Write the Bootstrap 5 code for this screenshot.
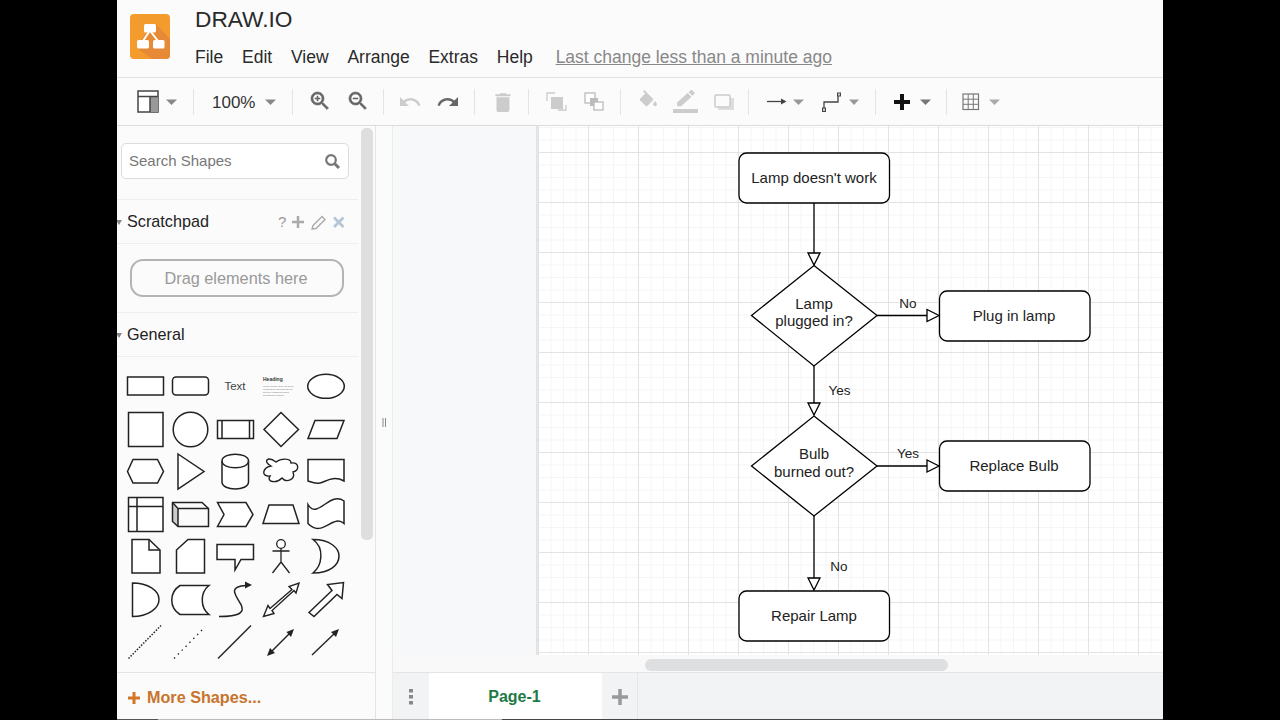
<!DOCTYPE html>
<html lang="en">
<head>
<meta charset="utf-8">
<title>DRAW.IO</title>
<link href="https://cdn.jsdelivr.net/npm/bootstrap@5.3.0/dist/css/bootstrap.min.css" rel="stylesheet">
<style>
html,body{height:720px;overflow:hidden}
body{background:#000;font-family:"Liberation Sans",Arial,sans-serif;color:#222}
.app-frame{position:relative;width:1046px;height:720px;margin-left:117px;background:#fbfbfb;overflow:hidden}
.top-head{height:78px;border-bottom:1px solid #e2e2e2}
.logo-box{margin:14px 25px 0 13px;width:40px;height:45px;flex:none}
.doc-title{font-size:22.700px;line-height:26px;margin-top:6px;color:#2a2a2a}
.menu-row{margin-top:13px;font-size:17.500px;line-height:24px;gap:18.800px;color:#2a2a2a}
.last-change{margin-left:4px;color:#888;text-decoration:underline}
.tool-row{height:48px;border-bottom:1px solid #dcdcdc}
.tool-row svg{display:block;flex:none}
.tool-sep{width:1px;height:26px;background:#e4e4e4;align-self:center;flex:none}
.main-row{height:594px}
.side-panel{width:259px;flex:none;border-right:1px solid #e4e4e4}
.side-top{height:546px;overflow:hidden}
.side-list{width:241px;flex:none}
.search-wrap{padding:17px 9px 20px 4px;border-bottom:1px solid #eee}
.search-box{height:36px;border:1px solid #dcdcdc;border-radius:5px;background:#fff;padding:0 7px 0 7px;font-size:15px;color:#777}
.side-head{height:44px;border-bottom:1px solid #eee;font-size:16.200px;color:#222;padding-left:10px;position:relative}
.side-caret{position:absolute;left:-1px;top:20px;width:0;height:0;border-left:3px solid transparent;border-right:3px solid transparent;border-top:5px solid #888}
.head-tools{margin-left:auto;margin-right:13px}
.drop-wrap{height:69px;padding:15px 14px 0 13px;border-bottom:1px solid #eee}
.drop-box{height:38px;border:2px solid #b4b4b4;border-radius:13px;color:#999;font-size:16.300px;padding-right:2px}
.shape-grid{display:grid;grid-template-columns:repeat(5,45px);grid-auto-rows:42.5px;padding:8px 0 0 6px}
.shape-grid svg{display:block;overflow:visible}
.scroll-strip{flex:1}
.scroll-thumb{width:12px;height:412px;margin:2px 0 0 3px;background:#dedede;border-radius:5px}
.more-row{height:48px;border-top:1px solid #e4e4e4;padding:2px 0 0 11px;gap:7px;color:#c9742c;font-size:16.200px;font-weight:700}
.split-bar{width:17px;flex:none;border-right:1px solid #ececec}
.work-col{min-width:0}
.canvas-row{height:529px}
.canvas-pad{width:143px;flex:none;background:#f7f8fa}
.canvas-grid{position:relative;border-left:2px solid #e4e4e4;
background-color:#fff;
background-image:linear-gradient(#e3e3e3 1px,transparent 1px),linear-gradient(90deg,#e3e3e3 1px,transparent 1px),linear-gradient(#f5f5f5 1px,transparent 1px),linear-gradient(90deg,#f5f5f5 1px,transparent 1px);
background-size:50px 50px,50px 50px,12.5px 12.5px,12.5px 12.5px;
background-position:0 26px,0 26px,0 1px,0 1px}
.flow-chart{position:absolute;left:0;top:0;display:block;font-family:"Liberation Sans",Arial,sans-serif}
.hscroll-strip{height:17px;padding:4px 0 0 252px;background:#f9f9fa}
.hscroll-thumb{width:303px;height:12px;background:#dedfe1;border-radius:6px}
.tab-row{height:48px;background:#f1f3f4;border-top:1px solid #e4e4e4}
.tab-cell{width:36px;flex:none}
.tab-active{width:173px;flex:none;background:#fff;color:#1f7a45;font-weight:700;font-size:16px;padding-right:2px}
.tab-add{width:36px;flex:none;border-right:1px solid #e6e6e6}
.video-bar{position:absolute;left:0;right:0;bottom:0;height:1px;background:#444}
.video-bar-seen{width:385px;height:1px;background:#bbb}
.video-bar-played{width:41px;height:1px;background:#555}
</style>
</head>
<body>
<div class="app-frame d-flex flex-column">
  <header class="top-head d-flex flex-none">
    <svg class="logo-box" viewBox="0 0 40 45" width="40" height="45">
      <rect width="40" height="45" rx="4" fill="#f39b2d"/>
      <path d="M26 10 L40 25 V41 a4 4 0 0 1 -4 4 H22 L7 34 L14 22 Z" fill="#e68a37"/>
      <rect x="14" y="10" width="12" height="8.500" rx="1.500" fill="#fff"/>
      <rect x="7" y="26" width="12" height="8.500" rx="1.500" fill="#fff"/>
      <rect x="23" y="26" width="11.500" height="8.500" rx="1.500" fill="#fff"/>
      <path d="M19 18 L13 27 M21 18 L28 27" stroke="#fff" stroke-width="2" fill="none"/>
    </svg>
    <div>
      <div class="doc-title">DRAW.IO</div>
      <div class="menu-row d-flex">
        <span>File</span><span>Edit</span><span>View</span><span>Arrange</span><span>Extras</span><span>Help</span>
        <span class="last-change">Last change less than a minute ago</span>
      </div>
    </div>
  </header>

  <div class="tool-row d-flex align-items-stretch">
    <svg width="76" height="48" viewBox="117 78 76 48">
      <rect x="138" y="91" width="20" height="21" fill="#fff" stroke="#444" stroke-width="1.500"/>
      <rect x="150" y="96" width="8" height="16" fill="#999"/>
      <path d="M138 96.500H158M150 96.500V112" stroke="#444" stroke-width="1.500"/>
      <path d="M166 99.500H177L171.500 105Z" fill="#888"/>
    </svg>
    <div class="tool-sep"></div>
    <svg width="98" height="48" viewBox="194 78 98 48">
      <text x="212" y="108" font-size="17" fill="#333">100%</text>
      <path d="M265 99.500H276L270.500 105Z" fill="#888"/>
    </svg>
    <div class="tool-sep"></div>
    <svg width="90" height="48" viewBox="293 78 90 48">
      <g transform="translate(308 89)" fill="#666" stroke="#666" stroke-width=".6"><path d="M15.500 14h-.79l-.28-.27C15.410 12.590 16 11.110 16 9.500 16 5.910 13.090 3 9.500 3S3 5.910 3 9.500 5.910 16 9.500 16c1.610 0 3.090-.59 4.230-1.570l.27.28v.79l5 4.990L20.490 19l-4.990-5zm-6 0C7.010 14 5 11.990 5 9.500S7.010 5 9.500 5 14 7.010 14 9.500 11.990 14 9.500 14z"/><path d="M12 10h-2v2H9v-2H7V9h2V7h1v2h2v1z"/></g>
      <g transform="translate(346 89)" fill="#666" stroke="#666" stroke-width=".6"><path d="M15.500 14h-.79l-.28-.27C15.410 12.590 16 11.110 16 9.500 16 5.910 13.090 3 9.500 3S3 5.910 3 9.500 5.910 16 9.500 16c1.610 0 3.090-.59 4.230-1.570l.27.28v.79l5 4.990L20.490 19l-4.990-5zm-6 0C7.010 14 5 11.990 5 9.500S7.010 5 9.500 5 14 7.010 14 9.500 11.990 14 9.500 14z"/><path d="M7 9h5v1H7z"/></g>
    </svg>
    <div class="tool-sep"></div>
    <svg width="90" height="48" viewBox="384 78 90 48">
      <g transform="translate(398 90)" fill="#ccc"><path d="M12.500 8c-2.650 0-5.050.99-6.900 2.600L2 7v9h9l-3.620-3.620c1.390-1.160 3.160-1.880 5.120-1.880 3.540 0 6.550 2.310 7.600 5.500l2.370-.78C21.080 11.030 17.150 8 12.500 8z"/></g>
      <g transform="translate(436 90)" fill="#666"><path d="M18.400 10.600C16.550 8.990 14.150 8 11.500 8c-4.650 0-8.580 3.030-9.960 7.220L3.900 16c1.050-3.190 4.050-5.500 7.600-5.500 1.950 0 3.730.72 5.120 1.880L13 16h9V7l-3.600 3.600z"/></g>
    </svg>
    <div class="tool-sep"></div>
    <svg width="53" height="48" viewBox="475 78 53 48">
      <g transform="translate(490 90) scale(1.080 1.050)" fill="#ccc"><path d="M6 19c0 1.100.9 2 2 2h8c1.100 0 2-.9 2-2V7H6v12zM19 4h-3.500l-1-1h-5l-1 1H5v2h14V4z"/></g>
    </svg>
    <div class="tool-sep"></div>
    <svg width="91" height="48" viewBox="529 78 91 48">
      <rect x="551" y="97" width="12" height="12" fill="#ccc"/>
      <path d="M547 101V93H555M566 105V110H558" fill="none" stroke="#ccc" stroke-width="1.300"/>
      <rect x="585" y="93" width="10" height="10" fill="#fff" stroke="#bbb" stroke-width="1.300"/>
      <rect x="590" y="98" width="8" height="8" fill="#bbb"/>
      <rect x="594" y="102" width="9" height="8" fill="#fff" stroke="#bbb" stroke-width="1.300"/>
    </svg>
    <div class="tool-sep"></div>
    <svg width="127" height="48" viewBox="621 78 127 48">
      <g transform="translate(637 90) scale(.95)" fill="#ccc"><path d="M16.560 8.940L7.620 0 6.210 1.410l2.380 2.380-5.150 5.150c-.59.590-.59 1.540 0 2.120l5.500 5.500c.29.29.68.44 1.060.44s.77-.15 1.060-.44l5.500-5.500c.59-.58.59-1.530 0-2.120z"/><path d="M19 11.500s-2 2.170-2 3.500c0 1.100.9 2 2 2s2-.9 2-2c0-1.330-2-3.500-2-3.500z"/></g>
      <g transform="translate(673 90) scale(1.040 .95)" fill="#ccc"><path d="M17.750 7L14 3.250l-10 10V17h3.750l10-10zm2.960-2.960c.39-.39.39-1.020 0-1.410L18.370.29c-.39-.39-1.020-.39-1.410 0L15 2.250 18.750 6l1.960-1.960z"/></g>
      <rect x="673" y="109" width="25" height="4" fill="#ccc"/>
      <rect x="718" y="98" width="16" height="12" fill="#ddd"/>
      <rect x="715" y="95" width="15" height="12" rx="1" fill="#fbfbfb" stroke="#ccc" stroke-width="1.500"/>
    </svg>
    <div class="tool-sep"></div>
    <svg width="126" height="48" viewBox="749 78 126 48">
      <path d="M767 101.500H785" stroke="#444" stroke-width="1.300"/><path d="M781 98.500L786.500 101.500L781 104.500Z" fill="#444"/>
      <path d="M793 99.500H804L798.500 105Z" fill="#999"/>
      <path d="M824 108V102H838V96" fill="none" stroke="#444" stroke-width="1.300"/>
      <rect x="822.500" y="108" width="3" height="3.500" fill="#ccc" stroke="#444"/>
      <rect x="837.500" y="93" width="3" height="3" fill="#ccc" stroke="#444"/>
      <path d="M849 99.500H859L854 105Z" fill="#999"/>
    </svg>
    <div class="tool-sep"></div>
    <svg width="70" height="48" viewBox="876 78 70 48">
      <path d="M902 94V110M894 102H910" stroke="#111" stroke-width="4"/>
      <path d="M920 99.500H931L925.500 105Z" fill="#777"/>
    </svg>
    <div class="tool-sep"></div>
    <svg width="60" height="48" viewBox="947 78 60 48">
      <rect x="963" y="94" width="15.500" height="15.500" fill="none" stroke="#777" stroke-width="1.200"/>
      <path d="M968.200 94V109.500M973.300 94V109.500M963 99.200H978.500M963 104.300H978.500" stroke="#777" stroke-width="1"/>
      <path d="M989 99.500H1000L994.500 105Z" fill="#aaa"/>
    </svg>
  </div>

  <div class="main-row d-flex">
    <aside class="side-panel d-flex flex-column">
      <div class="side-top d-flex">
        <div class="side-list">
          <div class="search-wrap">
            <div class="search-box d-flex align-items-center justify-content-between">
              <span>Search Shapes</span>
              <svg width="17" height="17" viewBox="0 0 17 17"><circle cx="7" cy="7" r="4.800" fill="none" stroke="#777" stroke-width="2.200"/><path d="M10.500 10.500L15 15" stroke="#777" stroke-width="3"/></svg>
            </div>
          </div>
          <div class="side-head d-flex align-items-center">
            <i class="side-caret"></i>Scratchpad
            <svg class="head-tools" width="68" height="20" viewBox="0 0 68 20">
              <text x="1" y="15" font-size="15" fill="#999">?</text>
              <path d="M21 4V16M15 10H27" stroke="#aaa" stroke-width="2.500"/>
              <path d="M36 13.500L45 4.500L48 7.500L39 16.500L35 17Z" fill="none" stroke="#aaa" stroke-width="1.400"/>
              <path d="M57 5.500L66.500 15M66.500 5.500L57 15" stroke="#b5c6d6" stroke-width="2.800"/>
            </svg>
          </div>
          <div class="drop-wrap">
            <div class="drop-box d-flex align-items-center justify-content-center">Drag elements here</div>
          </div>
          <div class="side-head d-flex align-items-center"><i class="side-caret"></i>General</div>
          <div class="shape-grid">
            <svg width="45" height="42.500" viewBox="123 365 45 42.500"><rect x="127.500" y="377" width="36" height="18" fill="#fff" stroke="#222" stroke-width="1.500"/></svg>
            <svg width="45" height="42.500" viewBox="168 365 45 42.500"><rect x="172.500" y="377" width="36" height="18" rx="3.500" fill="#fff" stroke="#222" stroke-width="1.500"/></svg>
            <svg width="45" height="42.500" viewBox="213 365 45 42.500"><text x="235" y="390" font-size="11.500" text-anchor="middle" fill="#444">Text</text></svg>
            <svg width="45" height="42.500" viewBox="258 365 45 42.500"><text x="263" y="381" font-size="5" font-weight="700" fill="#333">Heading</text><text x="263" y="387" font-size="2.500" fill="#777">Lorem ipsum dolor sit amet,</text><text x="263" y="390" font-size="2.500" fill="#777">consectetur adipisicing elit,</text><text x="263" y="393" font-size="2.500" fill="#777">sed do eiusmod tempor</text><text x="263" y="396" font-size="2.500" fill="#777">incididunt ut labore.</text></svg>
            <svg width="45" height="42.500" viewBox="303 365 45 42.500"><ellipse cx="326" cy="386.300" rx="18.300" ry="12" fill="#fff" stroke="#222" stroke-width="1.500"/></svg>

            <svg width="45" height="42.500" viewBox="123 407.500 45 42.500"><rect x="128.500" y="412" width="34.500" height="34" fill="#fff" stroke="#222" stroke-width="1.500"/></svg>
            <svg width="45" height="42.500" viewBox="168 407.500 45 42.500"><circle cx="190.500" cy="429" r="17.300" fill="#fff" stroke="#222" stroke-width="1.500"/></svg>
            <svg width="45" height="42.500" viewBox="213 407.500 45 42.500"><rect x="217.500" y="420" width="36" height="18" fill="#fff" stroke="#222" stroke-width="1.500"/><path d="M222 420V438M249.500 420V438" stroke="#222" stroke-width="1.500"/></svg>
            <svg width="45" height="42.500" viewBox="258 407.500 45 42.500"><path d="M281 412L298.500 429L281 446L264 429Z" fill="#fff" stroke="#222" stroke-width="1.500"/></svg>
            <svg width="45" height="42.500" viewBox="303 407.500 45 42.500"><path d="M315 420H344L337 438H308Z" fill="#fff" stroke="#222" stroke-width="1.500"/></svg>

            <svg width="45" height="42.500" viewBox="123 450 45 42.500"><path d="M133 459.500H157.500L163.500 471.500L157.500 483H133L127.500 471.500Z" fill="#fff" stroke="#222" stroke-width="1.500"/></svg>
            <svg width="45" height="42.500" viewBox="168 450 45 42.500"><path d="M178 454L204 471.500L178 489Z" fill="#fff" stroke="#222" stroke-width="1.500"/></svg>
            <svg width="45" height="42.500" viewBox="213 450 45 42.500"><path d="M222 461V482C222 491.300 248.500 491.300 248.500 482V461C248.500 452 222 452 222 461Z" fill="#fff" stroke="#222" stroke-width="1.500"/><path d="M222 461C222 470 248.500 470 248.500 461" fill="none" stroke="#222" stroke-width="1.500"/></svg>
            <svg width="45" height="42.500" viewBox="258 450 45 42.500"><path d="M271 466C262 461 268 456 276 462C281 458 291 458 291 463C299 462 300 470 293 472C296 480 286 483 282 478C276 484 266 482 270 476C261 477 262 468 271 466Z" fill="#fff" stroke="#222" stroke-width="1.400"/></svg>
            <svg width="45" height="42.500" viewBox="303 450 45 42.500"><path d="M308 459.500H344V481C333 475 325 482 320 483C315 484 311 482 308 481Z" fill="#fff" stroke="#222" stroke-width="1.500"/></svg>

            <svg width="45" height="42.500" viewBox="123 492.500 45 42.500"><rect x="128.500" y="497" width="34.500" height="34" fill="#fff" stroke="#222" stroke-width="1.500"/><path d="M137 497V531M128.500 506H163" stroke="#222" stroke-width="1.500"/></svg>
            <svg width="45" height="42.500" viewBox="168 492.500 45 42.500"><path d="M178 508L172.500 503V521L178 526Z" fill="#ccc"/><path d="M172.500 502H202L208.500 508V526H178L172.500 521Z" fill="none" stroke="#222" stroke-width="1.500"/><path d="M172.500 502L178 508V526M178 508H208.500" fill="none" stroke="#222" stroke-width="1.500"/></svg>
            <svg width="45" height="42.500" viewBox="213 492.500 45 42.500"><path d="M217.500 502H246L253 514L246 526H217.500L224 514Z" fill="#fff" stroke="#222" stroke-width="1.500"/></svg>
            <svg width="45" height="42.500" viewBox="258 492.500 45 42.500"><path d="M269 504.500H293L299 523H263Z" fill="#fff" stroke="#222" stroke-width="1.500"/></svg>
            <svg width="45" height="42.500" viewBox="303 492.500 45 42.500"><path d="M308 504C317 520 330 490 344 500.500V523C333 513 322 538 308 523Z" fill="#fff" stroke="#222" stroke-width="1.500"/></svg>

            <svg width="45" height="42.500" viewBox="123 535 45 42.500"><path d="M132 539.500H149L160 550V573H132Z" fill="#fff" stroke="#222" stroke-width="1.500"/><path d="M149 539.500V550H160" fill="none" stroke="#222" stroke-width="1.500"/></svg>
            <svg width="45" height="42.500" viewBox="168 535 45 42.500"><path d="M188 539.500H204.500V573H176.500V550Z" fill="#fff" stroke="#222" stroke-width="1.500"/></svg>
            <svg width="45" height="42.500" viewBox="213 535 45 42.500"><path d="M217 544.500H253.500V559.500H241L235 570V559.500H217Z" fill="#fff" stroke="#222" stroke-width="1.500"/></svg>
            <svg width="45" height="42.500" viewBox="258 535 45 42.500"><circle cx="281" cy="544" r="4.300" fill="#fff" stroke="#222" stroke-width="1.300"/><path d="M281 548.500V562M272.500 551H289.500M281 562L272.500 573M281 562L289.500 573" fill="none" stroke="#222" stroke-width="1.300"/></svg>
            <svg width="45" height="42.500" viewBox="303 535 45 42.500"><path d="M313 539.500C330 539.500 339 548 339 556C339 565 330 573 313 573C322 566 325 548 313 539.500Z" fill="#fff" stroke="#222" stroke-width="1.500"/></svg>

            <svg width="45" height="42.500" viewBox="123 577.500 45 42.500"><path d="M132.500 582.500C148 582.500 159 590 159 599C159 608 148 616 132.500 616Z" fill="#fff" stroke="#222" stroke-width="1.500"/></svg>
            <svg width="45" height="42.500" viewBox="168 577.500 45 42.500"><path d="M180 585H209C200 592 200 607 209 614H180C169 607 169 592 180 585Z" fill="#fff" stroke="#222" stroke-width="1.500"/></svg>
            <svg width="45" height="42.500" viewBox="213 577.500 45 42.500"><path d="M219 616C240 616 245 612 241 604C235 594 228 586 246 585" fill="none" stroke="#222" stroke-width="1.500"/><path d="M245 581L252 584.500L245 588Z" fill="#222"/></svg>
            <svg width="45" height="42.500" viewBox="258 577.500 45 42.500"><path d="M263.500 616L268 605L270 608L292 589L289 586L299 582.500L296 592.500L294 590L272 610L274 613Z" fill="#fff" stroke="#222" stroke-width="1.400"/></svg>
            <svg width="45" height="42.500" viewBox="303 577.500 45 42.500"><path d="M309 612L332 590L327.500 584L343.500 582L342 598L337 594L314 616Z" fill="#fff" stroke="#222" stroke-width="1.500"/></svg>

            <svg width="45" height="42.500" viewBox="123 620 45 42.500"><path d="M128.500 658.500L161 625.500" stroke="#222" stroke-width="1.500" stroke-dasharray="1.500 1.500"/></svg>
            <svg width="45" height="42.500" viewBox="168 620 45 42.500"><path d="M174 658.500L205 627" stroke="#222" stroke-width="1.300" stroke-dasharray="1.500 4"/></svg>
            <svg width="45" height="42.500" viewBox="213 620 45 42.500"><path d="M218 658.500L251 625.500" stroke="#222" stroke-width="1.500"/></svg>
            <svg width="45" height="42.500" viewBox="258 620 45 42.500"><path d="M270 653L291 632" stroke="#222" stroke-width="1.400"/><path d="M267 656L270 648L275 653ZM294 629L286.500 632L291 637Z" fill="#222"/></svg>
            <svg width="45" height="42.500" viewBox="303 620 45 42.500"><path d="M312 655L336 632" stroke="#222" stroke-width="1.400"/><path d="M339 629L331 632L336 637Z" fill="#222"/></svg>
          </div>
        </div>
        <div class="scroll-strip"><div class="scroll-thumb"></div></div>
      </div>
      <div class="more-row d-flex align-items-center">
        <svg width="12" height="12" viewBox="0 0 12 12"><path d="M6 0V12M0 6H12" stroke="#d2762a" stroke-width="3"/></svg>
        <span>More Shapes...</span>
      </div>
    </aside>
    <div class="split-bar d-flex align-items-center justify-content-center">
      <svg width="5" height="10" viewBox="0 0 5 10"><path d="M1 0V9M3.500 0V9" stroke="#888" stroke-width="1"/></svg>
    </div>
    <div class="work-col flex-grow-1 d-flex flex-column">
      <div class="canvas-row d-flex">
        <div class="canvas-pad"></div>
        <div class="canvas-grid flex-grow-1">
          <svg class="flow-chart" width="626" height="529" viewBox="538 126 626 529">
            <g fill="#fff" stroke="#000" stroke-width="1.300">
              <rect x="739" y="153" width="150.500" height="50" rx="7.500"/>
              <path d="M814 265.500L877 315.500L814 366L751.500 315.500Z"/>
              <rect x="939.500" y="291" width="150.500" height="50" rx="7.500"/>
              <path d="M814 416L877 466L814 516L751.500 466Z"/>
              <rect x="939.500" y="441" width="150.500" height="50" rx="7.500"/>
              <rect x="739" y="591" width="150.500" height="50" rx="7.500"/>
            </g>
            <g stroke="#000" stroke-width="1.300" fill="none">
              <path d="M814 203V253M877 315.500H927M814 366V403M877 466H927M814 516V578"/>
            </g>
            <g fill="#fff" stroke="#000" stroke-width="1.300">
              <path d="M808 253H820L814 265Z"/>
              <path d="M927 309.500V321.500L939 315.500Z"/>
              <path d="M808 403H820L814 415Z"/>
              <path d="M927 460V472L939 466Z"/>
              <path d="M808 578H820L814 590Z"/>
            </g>
            <g font-size="15" text-anchor="middle" fill="#222">
              <text x="814" y="183">Lamp doesn't work</text>
              <text x="814" y="309">Lamp</text>
              <text x="814" y="326">plugged in?</text>
              <text x="1014" y="321">Plug in lamp</text>
              <text x="814" y="459">Bulb</text>
              <text x="814" y="477">burned out?</text>
              <text x="1014" y="471">Replace Bulb</text>
              <text x="814" y="621">Repair Lamp</text>
            </g>
            <g font-size="13.500" text-anchor="middle" fill="#222">
              <text x="908" y="308">No</text>
              <text x="839.500" y="395">Yes</text>
              <text x="908" y="458">Yes</text>
              <text x="839" y="571">No</text>
            </g>
          </svg>
        </div>
      </div>
      <div class="hscroll-strip"><div class="hscroll-thumb"></div></div>
      <div class="tab-row d-flex">
        <div class="tab-cell d-flex align-items-center justify-content-center">
          <svg width="4" height="16" viewBox="0 0 4 16"><path d="M0 0h4v3.500H0zM0 6h4v3.500H0zM0 12h4v3.500H0z" fill="#888"/></svg>
        </div>
        <div class="tab-active d-flex align-items-center justify-content-center">Page-1</div>
        <div class="tab-add d-flex align-items-center justify-content-center">
          <svg width="16" height="16" viewBox="0 0 16 16"><path d="M8 0V16M0 8H16" stroke="#999" stroke-width="3.500"/></svg>
        </div>
      </div>
    </div>
  </div>
  <div class="video-bar"><div class="video-bar-seen"><div class="video-bar-played"></div></div></div>
</div>
<script src="https://cdn.jsdelivr.net/npm/bootstrap@5.3.0/dist/js/bootstrap.bundle.min.js"></script>
</body>
</html>
